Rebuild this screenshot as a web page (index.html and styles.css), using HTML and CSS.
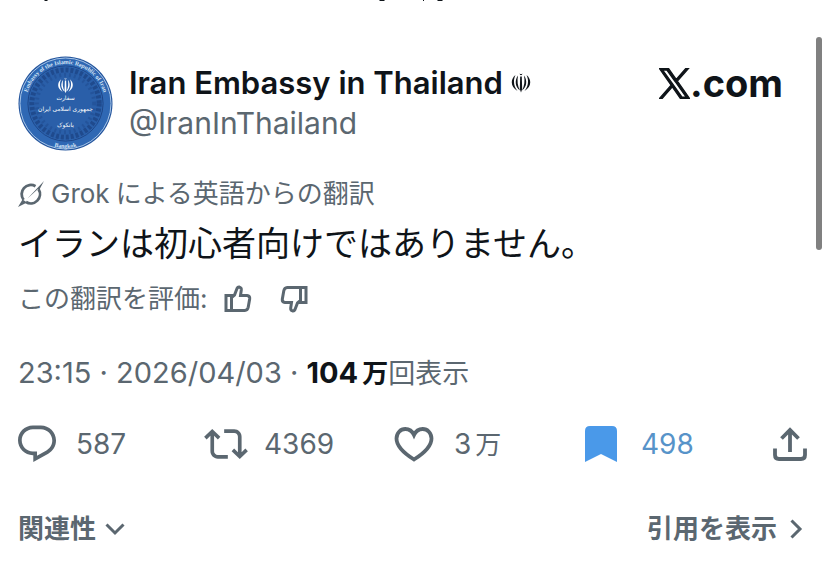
FILE: index.html
```
<!DOCTYPE html>
<html lang="ja">
<head>
    <meta charset="UTF-8">
    <meta name="viewport" content="width=device-width, initial-scale=1.0">
    <title>Iran Embassy in Thailand</title>
    <link rel="stylesheet" href="styles.css">
</head>
<body>
    <!-- tail of the line scrolled off above -->
    <svg class="cut-line" width="460" height="3" aria-hidden="true">
        <path d="M44 0h4l-1 1h-2zM379 0h6l-1 1h-4zM423 0h1v1h-1zM437 0h6l-1 1h-4z" fill="#0f1419"/>
    </svg>

    <article class="tweet">
        <header class="author">
            <svg class="avatar" viewBox="0 0 96 96" role="img" aria-label="Embassy of the Islamic Republic of Iran, Bangkok">
                <defs>
                    <path id="ringTop" d="M8 48a40 40 0 0 1 80 0"/>
                    <path id="ringBottom" d="M3 48a45 45 0 0 0 90 0"/>
                    <g id="emblem">
                        <path d="M9.200 3.500h1.600L11.200 16 10 19.500 8.800 16z"/>
                        <path d="M8.500.5q1.500 1.200 3 0-.5 1.800-1.500 1.800T8.500.5z"/>
                        <path d="M7 2.500C3.500 7 4 14 9 17.500 6.500 13 6 7.500 7 2.500zM13 2.500c3.500 4.500 3 11.500-2 15 2.500-4.500 3-10 2-15z"/>
                        <path d="M4.500 2C-1 6.500-.5 14 6.500 18 2.500 13 2 7 4.500 2zM15.500 2c5.500 4.500 5 12-2 16 4-5 4.500-11 2-16z"/>
                    </g>
                </defs>
                <circle cx="48" cy="48" r="47.500" fill="#24559d"/>
                <circle cx="48" cy="48" r="46" fill="#2f68b4" stroke="#a9c6e8" stroke-width="1"/>
                <circle cx="48" cy="48" r="37" fill="#2a5fa9"/>
                <circle cx="48" cy="48" r="34" fill="none" stroke="#1f4a8d" stroke-width="5" stroke-dasharray="3 2"/>
                <circle cx="48" cy="48" r="29" fill="none" stroke="#24549b" stroke-width="4" stroke-dasharray="2 3"/>
                <circle cx="48" cy="48" r="38" fill="none" stroke="#1d4688" stroke-width="1"/>
                <text class="seal-ring"><textPath href="#ringTop" startOffset="50%">Embassy of the Islamic Republic of Iran</textPath></text>
                <text class="seal-ring"><textPath href="#ringBottom" startOffset="50%">Bangkok</textPath></text>
                <use href="#emblem" transform="translate(40 22) scale(.8)" fill="#fff"/>
                <text class="seal-text" x="48" y="44" font-size="6">سفارت</text>
                <text class="seal-text" x="48" y="56" font-size="6">جمهوری اسلامی ایران</text>
                <text class="seal-text" x="48" y="72" font-size="6">بانکوک</text>
            </svg>
            <div class="names">
                <h1 class="display-name">Iran Embassy in Thailand
                    <svg class="flag" viewBox="0 0 20 20" aria-hidden="true"><use href="#emblem"/></svg>
                </h1>
                <a class="handle" href="#">@IranInThailand</a>
            </div>
            <a class="brand" href="#" aria-label="X.com">
                <svg viewBox="0 0 24 24" aria-hidden="true"><path d="M14.258 10.152L23.176 0h-2.113l-7.747 8.813L7.133 0H0l9.352 13.328L0 23.973h2.113l8.176-9.309 6.531 9.309h7.133zm-2.895 3.293l-.949-1.328L2.875 1.560h3.246l6.086 8.523.945 1.328 7.910 11.078h-3.246z"/></svg>
                <span>.com</span>
            </a>
        </header>

        <div class="translated">
            <svg class="grok" viewBox="0 0 26 26" aria-hidden="true">
                <path d="M17.500 5.200A9.200 9.200 0 0 0 5.600 18.800M20.600 8.300A9.200 9.200 0 0 1 8 21" fill="none" stroke="currentColor" stroke-width="2.800"/>
                <path d="M26 0 22 7.500v3L20 8 9.500 17.500zM0 26l4.500-7.500 2 1.200 2.500 1.800z"/>
            </svg>
            <span>Grok</span><span>による英語からの翻訳</span>
        </div>

        <p class="body">イランは初心者向けではありません。</p>

        <div class="rate">
            <span>この翻訳を評価:</span>
            <button type="button" aria-label="良い翻訳">
                <svg class="thumb" viewBox="0 0 28 28"><path d="M2 10.500h5.500v15H2zM7.500 12.500l3-2.500 2.500-6.500q.8-1.700 2.500-1.400 2 .6 1.800 2.800l-.8 5.600H23q3 .4 2.700 3.200l-1.500 8.500q-.6 3-3.500 3.300H7.500"/></svg>
            </button>
            <button type="button" aria-label="悪い翻訳">
                <svg class="thumb" viewBox="0 0 28 28"><path d="M26 17.500h-5.500v-15H26zM20.500 15.500l-3 2.500-2.500 6.500q-.8 1.700-2.500 1.400-2-.6-1.800-2.800l.8-5.600H5q-3-.4-2.700-3.200l1.500-8.500q.6-3 3.500-3.300h13.200"/></svg>
            </button>
        </div>

        <div class="meta">
            <time datetime="2026-04-03T23:15">23:15 · 2026/04/03</time> · <strong>104<span class="unit">万</span></strong><span class="label">回表示</span>
        </div>

        <div class="actions">
            <button type="button" aria-label="返信 587">
                <svg width="38" height="38" viewBox="1.750 1.750 20.500 20.500"><path d="M1.751 10c0-4.420 3.584-8 8.005-8h4.366c4.490 0 8.129 3.640 8.129 8.130 0 2.960-1.607 5.680-4.196 7.110l-8.054 4.460v-3.690h-.067c-4.490.1-8.183-3.510-8.183-8.010zm8.005-6c-3.317 0-6.005 2.690-6.005 6 0 3.370 2.770 6.080 6.138 6.010l.351-.01h1.761v2.300l5.087-2.810c1.951-1.080 3.163-3.130 3.163-5.360 0-3.390-2.744-6.130-6.129-6.130H9.756z"/></svg>
                <span>587</span>
            </button>
            <button type="button" class="repost" aria-label="リポスト 4369">
                <svg width="44" height="44" viewBox="0 0 24 24"><path d="M4.500 3.880l4.432 4.140-1.364 1.460L5.500 7.550V16c0 1.100.896 2 2 2H13v2H7.500c-2.209 0-4-1.790-4-4V7.550L1.432 9.480.068 8.020 4.500 3.880zM16.500 6H11V4h5.500c2.209 0 4 1.790 4 4v8.450l2.068-1.930 1.364 1.460-4.432 4.140-4.432-4.140 1.364-1.460 2.068 1.930V8c0-1.100-.896-2-2-2z"/></svg>
                <span>4369</span>
            </button>
            <button type="button" aria-label="いいね 3万">
                <svg width="40" height="36" viewBox="0 0 40 36"><path d="M20 33.500C12 28.500 2.500 21.500 2.500 12.500 2.500 7 6.500 3 11.300 3c3.800 0 7 2.300 8.700 6 1.700-3.700 4.900-6 8.700-6 4.800 0 8.800 4 8.800 9.500 0 9-9.500 16-17.500 21z" fill="none" stroke="currentColor" stroke-width="3.800"/></svg>
                <span>3<span class="unit">万</span></span>
            </button>
            <button type="button" class="saved" aria-label="ブックマーク 498">
                <svg width="32" height="36" viewBox="0 0 32 36"><path d="M0 5q0-5 5-5h22q5 0 5 5v31l-16-8-16 8z"/></svg>
                <span>498</span>
            </button>
            <button type="button" aria-label="共有">
                <svg width="34" height="36" viewBox="0 0 34 36"><path d="M17 26V4M8.500 12.500 17 4l8.500 8.500M2 22.500V29q0 4 4 4h22q4 0 4-4v-6.500" fill="none" stroke="currentColor" stroke-width="3.800"/></svg>
            </button>
        </div>

        <footer class="more">
            <button type="button">関連性
                <svg width="20" height="14" viewBox="0 0 20 14"><path d="M1.500 2.500 10 11l8.500-8.500"/></svg>
            </button>
            <a href="#">引用を表示
                <svg width="14" height="20" viewBox="0 0 14 20"><path d="M2.500 1.500 11 10l-8.500 8.500"/></svg>
            </a>
        </footer>
    </article>

    <div class="scroll-thumb"></div>
</body>
</html>
```
FILE: styles.css
```
* {
    margin: 0;
    padding: 0;
    box-sizing: border-box;
}

body {
    font-family: Inter, 'Noto Sans CJK JP', sans-serif;
    font-size: 26px;
    line-height: 36px;
    background: #fff;
    color: #5b6770;
}

button {
    font: inherit;
    color: inherit;
    background: none;
    border: none;
    cursor: pointer;
}

a {
    color: inherit;
    text-decoration: none;
}

svg {
    display: block;
    flex: none;
    fill: currentColor;
}

.cut-line {
    position: absolute;
    top: 0;
    left: 0;
}

.tweet {
    padding: 56px 21px 16px 18px;
}

.author {
    display: flex;
    align-items: flex-start;
}

.avatar {
    width: 95px;
    height: 95px;
    margin-right: 16px;
}

.seal-ring {
    font: bold 6px 'Liberation Serif', serif;
    fill: #d5e4f5;
    text-anchor: middle;
}

.seal-text {
    font-family: 'DejaVu Sans', sans-serif;
    fill: #fff;
    text-anchor: middle;
}

.names {
    flex: 1;
    padding-top: 7px;
}

.display-name {
    display: flex;
    align-items: center;
    gap: 8px;
    font-size: 31px;
    font-weight: 600;
    line-height: 40px;
    color: #0f1419;
}

.flag {
    width: 20px;
    height: 20px;
}

.handle {
    display: block;
    font-size: 30px;
    line-height: 40px;
}

.brand {
    display: flex;
    align-items: center;
    margin-right: 24px;
    padding-top: 7px;
    font-size: 38px;
    font-weight: 700;
    line-height: 40px;
    color: #0f1419;
}

.brand svg {
    width: 31px;
    height: 31px;
    stroke: currentColor;
}

.translated {
    display: flex;
    align-items: center;
    margin-top: 25px;
}

.grok {
    width: 26px;
    height: 26px;
    margin-right: 7px;
}

.translated span + span {
    margin-left: 6px;
}

.body {
    margin-top: 8px;
    font-size: 34px;
    line-height: 48px;
    color: #0f1419;
}

.rate {
    display: flex;
    align-items: center;
    gap: 28px;
    margin-top: 13px;
}

.rate span {
    margin-right: -12px;
}

.thumb {
    width: 28px;
    height: 28px;
    fill: none;
    stroke: currentColor;
    stroke-width: 3;
}

.meta {
    margin-top: 36px;
    font-size: 29px;
    line-height: 40px;
}

.meta strong {
    font-weight: 700;
    color: #0f1419;
}

.unit {
    margin-left: 4px;
    font-size: 26px;
}

.label {
    font-size: 27px;
}

.actions {
    display: grid;
    grid-template-columns: 186fr 190fr 191fr 188fr auto;
    align-items: center;
    margin-top: 28px;
}

.actions button {
    display: flex;
    align-items: center;
    gap: 20px;
    font-size: 28px;
}

.actions .repost {
    gap: 16px;
}

.actions .saved {
    gap: 24px;
    color: #5793c9;
}

.saved svg {
    color: #4a99e9;
}

.more {
    display: flex;
    justify-content: space-between;
    margin-top: 45px;
    padding-right: 4px;
    font-weight: 700;
}

.more button,
.more a {
    display: flex;
    align-items: center;
    gap: 9px;
}

.more a {
    gap: 12px;
}

.more path {
    fill: none;
    stroke: currentColor;
    stroke-width: 3;
}

.scroll-thumb {
    position: fixed;
    top: 37px;
    right: 6px;
    width: 6px;
    height: 213px;
    border-radius: 3px;
    background: #808080;
}
```
